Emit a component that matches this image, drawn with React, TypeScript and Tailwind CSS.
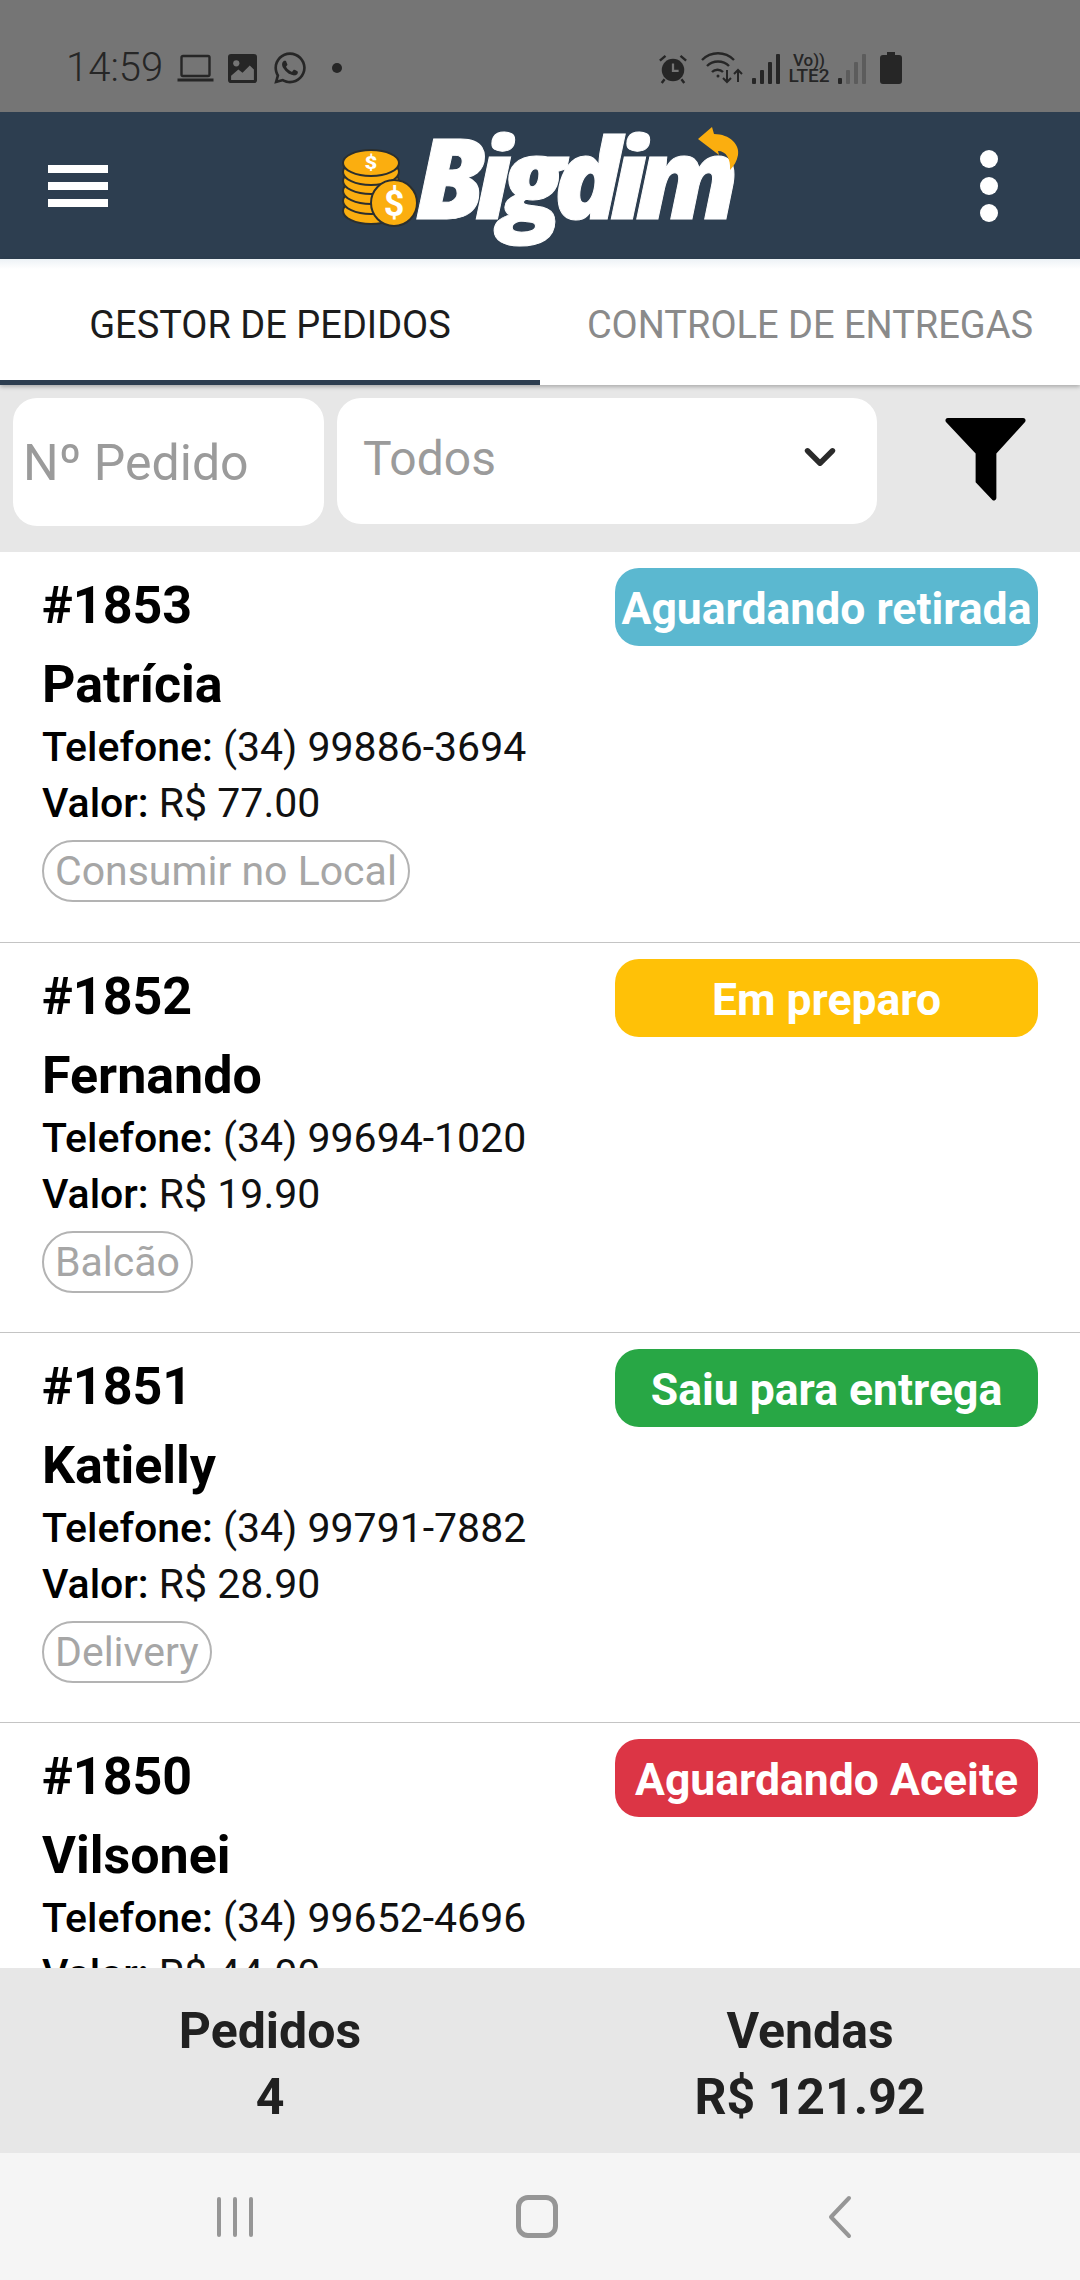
import React from 'react';
import { ChevronDown } from 'lucide-react';
import { FaWhatsapp } from 'react-icons/fa';

const ROBOTO = 'font-[Roboto,sans-serif]';

const orders = [
  { id: '#1853', name: 'Patrícia', phone: '(34) 99886-3694', value: 'R$ 77.00', type: 'Consumir no Local', status: 'Aguardando retirada', color: 'bg-[#5bb8d0]' },
  { id: '#1852', name: 'Fernando', phone: '(34) 99694-1020', value: 'R$ 19.90', type: 'Balcão', status: 'Em preparo', color: 'bg-[#ffc107]' },
  { id: '#1851', name: 'Katielly', phone: '(34) 99791-7882', value: 'R$ 28.90', type: 'Delivery', status: 'Saiu para entrega', color: 'bg-[#28a745]' },
  { id: '#1850', name: 'Vilsonei', phone: '(34) 99652-4696', value: 'R$ 44.00', type: 'Delivery', status: 'Aguardando Aceite', color: 'bg-[#dc3545]' },
];

function Coin({ cy }: { cy: number }) {
  return <ellipse cx="29" cy={cy} rx="28" ry="13" fill="#fbae0f" stroke="#2b2f2f" strokeWidth="2" />;
}

function Logo() {
  return (
    <div className="relative w-[400px] h-[118px] shrink-0">
      <svg viewBox="0 0 76 80" className="absolute left-[-2px] top-[22px] w-[76px] h-[80px]">
        <Coin cy={62} />
        <Coin cy={52} />
        <Coin cy={42} />
        <Coin cy={32} />
        <Coin cy={23} />
        <ellipse cx="29" cy="14" rx="28" ry="13" fill="#fbae0f" stroke="#2b2f2f" strokeWidth="2" />
        <text x="29" y="21" textAnchor="middle" fontSize="22" fontWeight="900" fill="#fff" fontFamily="Roboto" transform="translate(0 3) scale(1 .8)">$</text>
        <circle cx="52" cy="54" r="23" fill="#fbae0f" stroke="#2b2f2f" strokeWidth="2" />
        <text x="52" y="67" textAnchor="middle" fontSize="36" fontWeight="700" fill="#fff" fontFamily="Roboto">$</text>
      </svg>
      <span className="absolute left-[71px] top-[-26px] font-['Open_Sans',sans-serif] text-[112px] leading-[150px] font-extrabold italic tracking-[-11px] text-white [-webkit-text-stroke:1px_white]">
        Bigdim
      </span>
      <svg viewBox="0 0 42 44" className="absolute left-[354px] top-0 w-[42px] h-[44px]">
        <path d="M0 12 L14 0 L16 7 C32 7 42 18 40 28 C39 34 36 39 32 43 C33 32 28 24 20 24 L21 28 Z" fill="#fbae0f" />
      </svg>
    </div>
  );
}

function SignalBars({ className, full }: { className?: string; full?: boolean }) {
  const heights = [6, 14, 22, 30];
  return (
    <div className={`flex items-end gap-[4px] h-[30px] ${className}`}>
      {heights.map((h, i) => (
        <span
          key={h}
          className={`w-[4px] rounded-[1px] ${full || i === 0 ? 'bg-[#262626]' : 'bg-[#5c5c5c]'}`}
          style={{ height: h }}
        />
      ))}
    </div>
  );
}

function StatusBar() {
  return (
    <div className="h-[112px] shrink-0 bg-[#757575] flex items-start justify-between pt-[48px] pl-[66px] pr-[178px] text-[#262626]">
      <div className="flex items-center h-[40px]">
        <span className={`${ROBOTO} text-[40px] leading-[40px] font-light`}>14:59</span>
        <svg viewBox="0 0 36 28" className="w-[37px] h-[28px] ml-[14px]" fill="none" stroke="currentColor">
          <rect x="4" y="2" width="28" height="20" rx="1.5" strokeWidth="2.4" />
          <path d="M0 26h36" strokeWidth="3" />
        </svg>
        <svg viewBox="0 0 28 28" className="w-[29px] h-[29px] ml-[14px]">
          <path d="M3 0h22a3 3 0 0 1 3 3v22a3 3 0 0 1-3 3H3a3 3 0 0 1-3-3V3a3 3 0 0 1 3-3z" fill="currentColor" />
          <circle cx="8" cy="9" r="3" fill="#757575" />
          <path d="M3 25 L3 21 L10 15 L14 18 L21 11 L25 15 L25 25 Z" fill="#757575" />
        </svg>
        <FaWhatsapp className="w-[36px] h-[36px] ml-[15px]" />
        <span className="w-[10px] h-[10px] rounded-full bg-[#262626] ml-[24px]" />
      </div>
      <div className="flex items-end h-[40px] pb-[4px]">
        <svg viewBox="0 0 30 32" className="w-[30px] h-[30px]">
          <circle cx="15" cy="17" r="12" fill="currentColor" />
          <path d="M15 10v8h6" stroke="#757575" strokeWidth="2.4" fill="none" />
          <path d="M1 7 L7 2 M29 7 L23 2 M6 27 L3 31 M24 27 L27 31" stroke="currentColor" strokeWidth="2.6" />
        </svg>
        <svg viewBox="0 0 42 32" className="w-[42px] h-[32px] ml-[13px]" fill="none" stroke="currentColor" strokeWidth="2.4">
          <path d="M1 8 C10 -1 24 -1 33 8" />
          <path d="M6 14 C12 8 22 8 28 14" />
          <path d="M11 20 C14 17 19 17 22 20" />
          <circle cx="17" cy="24" r="1.5" fill="currentColor" stroke="none" />
          <path d="M26 18v12M22 26l4 4 4-4M37 30V18M33 22l4-4 4 4" strokeWidth="2" />
        </svg>
        <SignalBars className="ml-[9px]" full />
        <div className={`${ROBOTO} ml-[8px] w-[42px] text-center text-[17px] leading-[16px] font-medium`}>
          <div>Vo))</div>
          <div className="text-[19px]">LTE2</div>
        </div>
        <SignalBars className="ml-[8px]" />
        <svg viewBox="0 0 22 32" className="w-[22px] h-[32px] ml-[14px]">
          <path d="M7 0h8v3h4a3 3 0 0 1 3 3v23a3 3 0 0 1-3 3H3a3 3 0 0 1-3-3V6a3 3 0 0 1 3-3h4z" fill="currentColor" />
        </svg>
      </div>
    </div>
  );
}

function Funnel() {
  return (
    <svg viewBox="0 0 82 84" className="w-[83px] h-[83px]">
      <path d="M3 0h76a2.5 2.5 0 0 1 2 4L52 36v45a2.5 2.5 0 0 1-4 2L31 65V36L1 4a2.5 2.5 0 0 1 2-4z" fill="#000" />
    </svg>
  );
}

function OrderCard({ order }: { order: (typeof orders)[number] }) {
  return (
    <div className="h-[390px] first:h-[391px] shrink-0 border-b border-[#c4c4c4] pl-[42px] pr-[42px] pt-[16px]">
      <div className="flex justify-between items-start">
        <div className="text-[52px] leading-[76px] font-bold text-black">{order.id}</div>
        <div className={`${order.color} w-[423px] h-[78px] pt-[4px] rounded-[24px] flex items-center justify-center text-white text-[44.5px] font-bold whitespace-nowrap`}>
          {order.status}
        </div>
      </div>
      <div className="text-[52px] leading-[60px] font-bold text-black mt-[9px]">{order.name}</div>
      <div className="text-[41px] leading-[56px] text-[#111] mt-[4px]">
        <b className="font-medium text-black">Telefone:</b> {order.phone}
      </div>
      <div className="text-[41px] leading-[56px] text-[#111]">
        <b className="font-medium text-black">Valor:</b> {order.value}
      </div>
      <div className="flex mt-[9px]">
        <span className="border-2 border-[#b3b3b3] rounded-[32px] px-[11px] h-[62px] leading-[58px] text-[41px] text-[#a6a6a6] whitespace-nowrap">
          {order.type}
        </span>
      </div>
    </div>
  );
}

export default function App() {
  return (
    <div className={`${ROBOTO} w-[1080px] h-[2280px] flex flex-col overflow-hidden bg-white`}>
      <StatusBar />

      <header className="h-[147px] shrink-0 bg-[#2d3e50] flex items-center justify-between pl-[48px] pr-[82px]">
        <div className="flex flex-col gap-[9px] w-[60px]">
          <span className="h-[8px] bg-white" />
          <span className="h-[8px] bg-white" />
          <span className="h-[8px] bg-white" />
        </div>
        <Logo />
        <div className="flex flex-col gap-[9px]">
          <span className="w-[18px] h-[18px] rounded-full bg-white" />
          <span className="w-[18px] h-[18px] rounded-full bg-white" />
          <span className="w-[18px] h-[18px] rounded-full bg-white" />
        </div>
      </header>

      <nav className="h-[126px] shrink-0 bg-[linear-gradient(#edf2f6_0,#ffffff_10px)] flex relative z-10 shadow-[0_2px_4px_rgba(0,0,0,0.25)]">
        <div className="w-[540px] flex items-center justify-center border-b-[5px] border-[#2d3e50] pt-[12px] text-[38px] text-[#1c1c1c]">
          GESTOR DE PEDIDOS
        </div>
        <div className="w-[540px] flex items-center justify-center pt-[7px] text-[38px] text-[#8a8a8a]">
          CONTROLE DE ENTREGAS
        </div>
      </nav>

      <div className="h-[167px] shrink-0 bg-[#e7e7e7] flex items-start pt-[13px] pl-[13px]">
        <div className="w-[311px] h-[128px] pt-[2px] bg-white rounded-[24px] flex items-center pl-[10px] text-[50px] text-[#9b9b9b]">
          Nº Pedido
        </div>
        <div className="w-[540px] h-[126px] ml-[13px] bg-white rounded-[24px] flex items-center justify-between pl-[26px] pr-[32px] text-[48px] text-[#9b9b9b]">
          <span className="-mt-[4px]">Todos</span>
          <ChevronDown className="w-[50px] h-[50px] text-[#2b2b2b] -mt-[8px]" strokeWidth={2.6} />
        </div>
        <div className="ml-[67px] mt-[20px]">
          <Funnel />
        </div>
      </div>

      <main className="flex-1 min-h-0 overflow-hidden flex flex-col">
        {orders.map((order) => (
          <OrderCard key={order.id} order={order} />
        ))}
      </main>

      <footer className="h-[185px] shrink-0 bg-[#e7e7e7] flex text-[#212121] text-[50px] leading-[66px] font-bold text-center">
        <div className="w-[540px] pt-[30px]">
          <div>Pedidos</div>
          <div>4</div>
        </div>
        <div className="w-[540px] pt-[30px]">
          <div>Vendas</div>
          <div>R$ 121.92</div>
        </div>
      </footer>

      <div className="h-[127px] shrink-0 bg-[#f5f5f5] flex items-center pl-[217px]">
        <div className="flex gap-[12px]">
          <span className="w-[4px] h-[40px] bg-[#969696] rounded-full" />
          <span className="w-[4px] h-[40px] bg-[#969696] rounded-full" />
          <span className="w-[4px] h-[40px] bg-[#969696] rounded-full" />
        </div>
        <span className="w-[42px] h-[43px] ml-[263px] border-[5px] border-[#969696] rounded-[12px]" />
        <svg viewBox="0 0 26 44" className="w-[26px] h-[44px] ml-[269px]" fill="none" stroke="#969696" strokeWidth="4" strokeLinecap="round" strokeLinejoin="round">
          <path d="M22 3 L4 22 L22 41" />
        </svg>
      </div>
    </div>
  );
}
